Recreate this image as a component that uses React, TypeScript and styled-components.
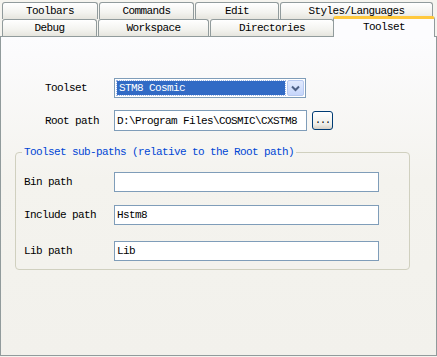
import styled, { createGlobalStyle } from 'styled-components'

const GlobalStyle = createGlobalStyle`
    html, body {
        margin: 0;
        padding: 0;
        background: #f5f4ef;
    }
    body {
        font-family: "Liberation Mono", "DejaVu Sans Mono", monospace;
        font-size: 11px;
        letter-spacing: -0.6px;
        color: #000;
    }
`

const Window = styled.div`
    width: 437px;
    height: 357px;
    overflow: hidden;
    background: #f5f4ef;
`

const TabStrip = styled.div`
    height: 36px;
    display: flex;
    flex-direction: column;
`

const TabRow = styled.div<{ $top: number }>`
    display: flex;
    align-items: flex-end;
    height: 17px;
    padding-left: 2px;
    margin-top: ${({ $top }) => $top}px;
`

const Tab = styled.div<{ $w: number; $gap?: number }>`
    box-sizing: border-box;
    width: ${({ $w }) => $w}px;
    height: 17px;
    margin-left: ${({ $gap }) => $gap ?? 0}px;
    border: 1px solid #919b9c;
    border-bottom: 0;
    border-radius: 3px 3px 0 0;
    background: linear-gradient(#ffffff, #f3f3ef 60%, #e6e5de);
    display: flex;
    align-items: center;
    justify-content: center;
    line-height: 14px;
`

const ActiveTab = styled.div<{ $w: number }>`
    position: relative;
    z-index: 2;
    box-sizing: border-box;
    width: ${({ $w }) => $w}px;
    height: 21px;
    margin-left: -1px;
    margin-bottom: -1px;
    border: 1px solid #919b9c;
    border-top: 3px solid #ffc83c;
    border-bottom: 0;
    border-radius: 3px 3px 0 0;
    background: #fcfcfe;
    display: flex;
    justify-content: center;
    padding-top: 1px;
    line-height: 14px;
`

const Panel = styled.div`
    box-sizing: border-box;
    height: 320px;
    border: 1px solid #919b9c;
    border-right-color: #8f9a9b;
    background: linear-gradient(#fcfcfe, #f4f3ee 45%, #f2f1ec);
    padding-top: 41px;
`

const FormGrid = styled.div<{ $label: number }>`
    display: grid;
    grid-template-columns: ${({ $label }) => $label}px auto;
    align-items: center;
`

const TopForm = styled(FormGrid)`
    margin-left: 44px;
`

const Label = styled.span<{ $top?: number }>`
    margin-top: ${({ $top }) => $top ?? 0}px;
    white-space: nowrap;
`

const Field = styled.div<{ $top?: number }>`
    display: flex;
    align-items: center;
    gap: 5px;
    margin-top: ${({ $top }) => $top ?? 0}px;
`

const TextBox = styled.div<{ $w: number; $h?: number }>`
    box-sizing: border-box;
    width: ${({ $w }) => $w}px;
    height: ${({ $h }) => $h ?? 20}px;
    border: 1px solid #7f9db9;
    background: #fff;
    padding-left: 2px;
    display: flex;
    align-items: center;
    white-space: nowrap;
    overflow: hidden;
`

const Select = styled.div`
    box-sizing: border-box;
    width: 192px;
    height: 20px;
    border: 1px solid #7f9db9;
    background: #fff;
    display: flex;
    align-items: center;
    padding: 1px;
    gap: 2px;
`

const SelectValue = styled.div`
    flex: 1;
    height: 14px;
    margin-left: 1px;
    background: #316ac5;
    color: #fff;
    outline: 1px dotted #9fb7e6;
    outline-offset: 0;
    padding-left: 2px;
    line-height: 14px;
    white-space: nowrap;
`

const DropButton = styled.div`
    box-sizing: border-box;
    width: 17px;
    height: 16px;
    border: 1px solid #b7c9f0;
    border-radius: 2px;
    background: linear-gradient(#e1eafe, #c6d6fb);
    display: flex;
    align-items: center;
    justify-content: center;
`

const BrowseButton = styled.div`
    box-sizing: border-box;
    width: 21px;
    height: 19px;
    border: 1px solid #003c74;
    border-radius: 3px;
    background: linear-gradient(#ffffff, #f0f0ea 70%, #d6d0c5);
    display: flex;
    align-items: flex-end;
    justify-content: center;
    padding-bottom: 3px;
    font-size: 10px;
    line-height: 10px;
    letter-spacing: -1px;
`

const Group = styled.fieldset`
    box-sizing: border-box;
    width: 395px;
    margin: 15px 0 0 14px;
    padding: 13px 0 8px 8px;
    border: 1px solid #d0d0bf;
    border-radius: 4px;
`

const Legend = styled.legend`
    padding: 0 2px;
    margin-left: -2px;
    color: #0046d5;
    line-height: 13px;
`

const App = () => {
    return (
        <Window>
            <GlobalStyle />
            <TabStrip>
                <TabRow $top={2}>
                    <Tab $w={96}>Toolbars</Tab>
                    <Tab $w={95} $gap={1}>Commands</Tab>
                    <Tab $w={84} $gap={1}>Edit</Tab>
                    <Tab $w={153} $gap={1}>Styles/Languages</Tab>
                </TabRow>
                <TabRow $top={0}>
                    <Tab $w={95}>Debug</Tab>
                    <Tab $w={111} $gap={1}>Workspace</Tab>
                    <Tab $w={124} $gap={1}>Directories</Tab>
                    <ActiveTab $w={102}>Toolset</ActiveTab>
                </TabRow>
            </TabStrip>
            <Panel>
                <TopForm $label={69}>
                    <Label>Toolset</Label>
                    <Field>
                        <Select>
                            <SelectValue>STM8 Cosmic</SelectValue>
                            <DropButton>
                                <svg width="9" height="7" viewBox="0 0 9 7">
                                    <path d="M1 1.5 L4.5 5 L8 1.5" fill="none" stroke="#4d6185" strokeWidth="2" />
                                </svg>
                            </DropButton>
                        </Select>
                    </Field>
                    <Label $top={12}>Root path</Label>
                    <Field $top={12}>
                        <TextBox $w={193} $h={21}>D:\Program Files\COSMIC\CXSTM8</TextBox>
                        <BrowseButton>...</BrowseButton>
                    </Field>
                </TopForm>
                <Group>
                    <Legend>Toolset sub-paths (relative to the Root path)</Legend>
                    <FormGrid $label={90}>
                        <Label>Bin path</Label>
                        <Field>
                            <TextBox $w={265} />
                        </Field>
                        <Label $top={13}>Include path</Label>
                        <Field $top={13}>
                            <TextBox $w={265}>Hstm8</TextBox>
                        </Field>
                        <Label $top={16}>Lib path</Label>
                        <Field $top={16}>
                            <TextBox $w={265}>Lib</TextBox>
                        </Field>
                    </FormGrid>
                </Group>
            </Panel>
        </Window>
    )
}

export default App
